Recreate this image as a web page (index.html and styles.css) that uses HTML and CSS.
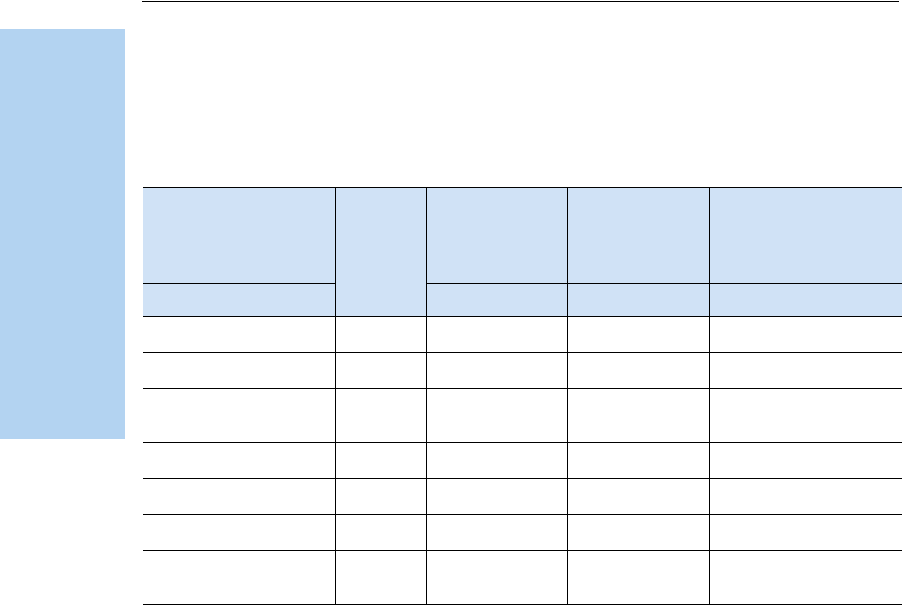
FILE: index.html
```html
<!DOCTYPE html>
<html lang="en">
<head>
<meta charset="utf-8">
<title>Table</title>
<link rel="stylesheet" href="styles.css">
</head>
<body>
<div class="page">
  <aside class="sidebar"></aside>
  <main class="main">
    <div class="rule"></div>
    <div class="grid">
      <div class="cell head"></div>
      <div class="cell head span2"></div>
      <div class="cell head"></div>
      <div class="cell head"></div>
      <div class="cell head last"></div>

      <div class="cell head"></div>
      <div class="cell head"></div>
      <div class="cell head"></div>
      <div class="cell head last"></div>

      <div class="cell"></div><div class="cell"></div><div class="cell"></div><div class="cell"></div><div class="cell last"></div>
      <div class="cell"></div><div class="cell"></div><div class="cell"></div><div class="cell"></div><div class="cell last"></div>
      <div class="cell"></div><div class="cell"></div><div class="cell"></div><div class="cell"></div><div class="cell last"></div>
      <div class="cell"></div><div class="cell"></div><div class="cell"></div><div class="cell"></div><div class="cell last"></div>
      <div class="cell"></div><div class="cell"></div><div class="cell"></div><div class="cell"></div><div class="cell last"></div>
      <div class="cell"></div><div class="cell"></div><div class="cell"></div><div class="cell"></div><div class="cell last"></div>
      <div class="cell"></div><div class="cell"></div><div class="cell"></div><div class="cell"></div><div class="cell last"></div>
    </div>
  </main>
</div>
</body>
</html>
```

FILE: styles.css
```css
html, body {
  margin: 0;
  padding: 0;
  overflow: hidden;
  background: #ffffff;
  font-family: "Liberation Sans", Arial, sans-serif;
}

.page {
  display: flex;
  align-items: flex-start;
  width: 902px;
  height: 605px;
}

.sidebar {
  flex: 0 0 125px;
  height: 410px;
  margin-top: 29px;
  background: #b3d3f1;
}

.main {
  flex: 0 0 auto;
  margin-left: 17px;
  padding-top: 1px;
}

.rule {
  width: 757px;
  height: 1px;
  background: #000000;
}

.grid {
  display: grid;
  grid-template-columns: 193px 91px 141px 142px 193px;
  grid-template-rows: 96px 33px 36px 36px 54px 36px 36px 36px 54px;
  margin-top: 185px;
  margin-left: 1px;
  border-top: 1px solid #000000;
}

.cell {
  box-sizing: border-box;
  border-bottom: 1px solid #000000;
  border-right: 1px solid #000000;
}

.cell.last {
  border-right: none;
}

.head {
  background: #d0e2f6;
}

.span2 {
  grid-row: span 2;
}
```
